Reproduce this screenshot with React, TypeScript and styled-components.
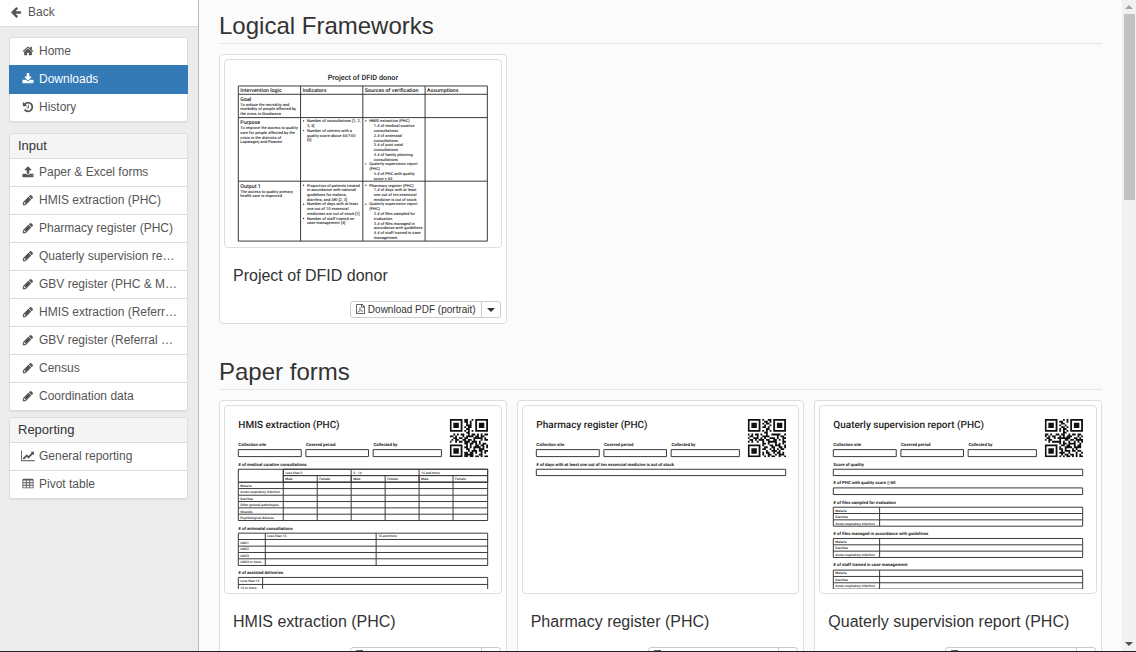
import React from 'react';
import styled, { createGlobalStyle, css } from 'styled-components';

const GlobalStyle = createGlobalStyle`
  * { box-sizing: border-box; }
  body {
    margin: 0;
    background: #fbfbfb;
    color: #333;
    font-family: "Liberation Sans", Arial, sans-serif;
    font-size: 12px;
    line-height: 17px;
  }
  h1, h2, p, ul { margin: 0; padding: 0; font-weight: 400; }
  a { color: inherit; text-decoration: none; }
  button { font: inherit; color: inherit; cursor: pointer; }
`;

/* ---------- icons ---------- */

const glyphs = {
  back: 'M1664 896v128q0 53-32.5 90.5t-84.5 37.5h-704l293 294q38 36 38 90t-38 90l-75 76q-37 37-90 37-52 0-91-37l-651-652q-37-37-37-90 0-52 37-91l651-650q38-38 91-38 52 0 90 38l75 74q38 38 38 91t-38 91l-293 293h704q52 0 84.5 37.5t32.5 90.5z',
  home: 'M1472 992v480q0 26-19 45t-45 19h-384v-384h-256v384h-384q-26 0-45-19t-19-45v-480q0-1 .5-3t.5-3l575-474 575 474q1 2 1 6zm223-69l-62 74q-8 9-21 11h-3q-13 0-21-7l-692-577-692 577q-12 8-24 7-13-2-21-11l-62-74q-8-10-7-23.5t11-21.5l719-599q32-26 76-26t76 26l244 204v-195q0-14 9-23t23-9h192q14 0 23 9t9 23v408l219 182q10 8 11 21.5t-7 23.5z',
  download:
    'M1344 1344q0-26-19-45t-45-19-45 19-19 45 19 45 45 19 45-19 19-45zm256 0q0-26-19-45t-45-19-45 19-19 45 19 45 45 19 45-19 19-45zm128-224v320q0 40-28 68t-68 28h-1472q-40 0-68-28t-28-68v-320q0-40 28-68t68-28h465l135 136q58 56 136 56t136-56l136-136h464q40 0 68 28t28 68zm-325-569q17 41-14 70l-448 448q-18 19-45 19t-45-19l-448-448q-31-29-14-70 17-39 59-39h256v-448q0-26 19-45t45-19h256q26 0 45 19t19 45v448h256q42 0 59 39z',
  upload:
    'M1344 1472q0-26-19-45t-45-19-45 19-19 45 19 45 45 19 45-19 19-45zm256 0q0-26-19-45t-45-19-45 19-19 45 19 45 45 19 45-19 19-45zm128-224v320q0 40-28 68t-68 28h-1472q-40 0-68-28t-28-68v-320q0-40 28-68t68-28h427q21 56 70.5 92t110.5 36h256q61 0 110.5-36t70.5-92h427q40 0 68 28t28 68zm-325-648q-17 40-59 40h-256v448q0 26-19 45t-45 19h-256q-26 0-45-19t-19-45v-448h-256q-42 0-59-40-17-39 14-69l448-448q18-19 45-19t45 19l448 448q31 30 14 69z',
  history:
    'M1664 896q0 156-61 298t-164 245-245 164-298 61q-172 0-327-72.5t-264-204.5q-7-10-6.5-22.5t8.5-20.5l137-138q10-9 25-9 16 2 23 12 73 95 179 147t225 52q104 0 198.5-40.5t163.5-109.5 109.5-163.5 40.5-198.5-40.5-198.5-109.5-163.5-163.5-109.5-198.5-40.5q-98 0-188 35.5t-160 101.5l137 138q31 30 14 69-17 40-59 40h-448q-26 0-45-19t-19-45v-448q0-42 40-59 39-17 69 14l130 129q107-101 244.5-156.5t284.5-55.5q156 0 298 61t245 164 164 245 61 298zm-640-288v448q0 14-9 23t-23 9h-320q-14 0-23-9t-9-23v-64q0-14 9-23t23-9h224v-352q0-14 9-23t23-9h64q14 0 23 9t9 23z',
  pencil:
    'M491 1536l91-91-235-235-91 91v107h128v128h107zM960 416l416 416-832 832h-416v-416zM1643 512q0 53-37 90l-166 166-416-416 166-165q36-38 90-38 53 0 91 38l235 234q37 39 37 91z',
  chart:
    'M2048 1536v128h-2048v-1536h128v1408h1920zm-128-1248v435q0 21-19.5 29.5t-35.5-7.5l-121-121-633 633q-10 10-23 10t-23-10l-233-233-416 416-192-192 585-585q10-10 23-10t23 10l233 233 464-464-121-121q-16-16-7.5-35.5t29.5-19.5h435q14 0 23 9t9 23z',
  table:
    'M224 128h1344q66 0 113 47t47 113v1088q0 66-47 113t-113 47h-1344q-66 0-113-47t-47-113v-1088q0-66 47-113t113-47zM192 384v256h384v-256zM704 384v256h384v-256zM1216 384v256h384v-256zM192 768v256h384v-256zM704 768v256h384v-256zM1216 768v256h384v-256zM192 1152v256h384v-256zM704 1152v256h384v-256zM1216 1152v256h384v-256z',
};

type GlyphName = keyof typeof glyphs;

const IconSvg = styled.svg`
  display: block;
  flex: none;
  fill: currentColor;
`;

function Glyph({ name }: { name: GlyphName }) {
  const wide = name === 'chart';
  return (
    <IconSvg width={wide ? 14 : 12} height="12" viewBox={wide ? '0 0 2048 1792' : '0 0 1792 1792'} aria-hidden="true">
      <path fillRule="evenodd" d={glyphs[name]} />
    </IconSvg>
  );
}

function PdfIcon() {
  return (
    <IconSvg width="9" height="10" viewBox="128 0 1536 1792" aria-hidden="true">
      <path
        fillRule="evenodd"
        d="M1596 380q28 28 48 76t20 88v1152q0 40-28 68t-68 28h-1344q-40 0-68-28t-28-68v-1600q0-40 28-68t68-28h896q40 0 88 20t76 48zm-444-244v376h376q-10-29-22-41l-313-313q-12-12-41-22zm384 1528v-1024h-416q-40 0-68-28t-28-68v-416h-768v1536h1280z"
      />
      <path
        fill="none"
        stroke="currentColor"
        strokeWidth="80"
        d="M440 1500q140-60 290-360 140-290 110-470-10-60-50-40-60 120 60 360 130 240 330 300 190 20 160-40-90-100-420-40-330 60-450 170-70 80-30 120z"
      />
    </IconSvg>
  );
}

/* ---------- page frame ---------- */

const Page = styled.div`
  display: flex;
  height: 100vh;
  overflow: hidden;
  border-bottom: 1px solid #222;
`;

const Sidebar = styled.nav`
  flex: 0 0 199px;
  min-width: 0;
  display: flex;
  flex-direction: column;
  background: #ececec;
  border-right: 1px solid #bbb;
  color: #555;
`;

const BackLink = styled.a`
  display: flex;
  align-items: center;
  gap: 6px;
  height: 27px;
  padding: 0 10px 2px;
  margin-bottom: 10px;
  background: #fff;
  border-bottom: 1px solid #ddd;
`;

const Panel = styled.section<{ $after?: number }>`
  margin: 0 10px ${(p) => p.$after ?? 6}px 9px;
  background: #fff;
  border: 1px solid #ddd;
  border-radius: 3px;
  box-shadow: 0 1px 1px rgba(0, 0, 0, 0.05);
`;

const PanelTitle = styled.h2`
  height: 24px;
  padding: 0 8px;
  background: #f5f5f5;
  border-radius: 2px 2px 0 0;
  color: #333;
  font-size: 13px;
  line-height: 24px;
`;

const PanelList = styled.ul`
  list-style: none;
`;

const NavRow = styled.li`
  h2 + ul > &, & + & { border-top: 1px solid #ddd; }
`;

const NavLink = styled.a<{ $active?: boolean }>`
  display: flex;
  align-items: center;
  gap: 3px;
  height: 27px;
  padding: 0 8px 0 10px;
  ${(p) =>
    p.$active &&
    css`
      position: relative;
      height: 29px;
      margin: -1px;
      padding: 0 9px 0 11px;
      background: #337ab7;
      color: #fff;
    `}
`;

const IconSlot = styled.span`
  flex: 0 0 16px;
  display: flex;
  justify-content: center;
  padding-bottom: 1px;
`;

const NavText = styled.span`
  overflow: hidden;
  text-overflow: ellipsis;
  white-space: nowrap;
`;

const Main = styled.main`
  flex: 1;
  min-width: 0;
  padding: 13px 20px 20px;
  overflow-y: auto;
  scrollbar-width: none;
`;

const Section = styled.section`
  margin-bottom: 35px;
`;

const SectionTitle = styled.h1`
  margin-bottom: 10px;
  padding-bottom: 4px;
  border-bottom: 1px solid #e5e5e5;
  font-size: 24px;
  line-height: 26px;
`;

const Cards = styled.div`
  display: grid;
  grid-template-columns: repeat(3, 1fr);
  gap: 10px;
`;

const CardBox = styled.article`
  padding: 4px;
  background: #fff;
  border: 1px solid #ddd;
  border-radius: 4px;
`;

const Thumbnail = styled.a`
  display: block;
  padding: 4px;
  border: 1px solid #ddd;
  border-radius: 4px;
`;

const Preview = styled.svg`
  display: block;
  width: 100%;
  font-family: Roboto, "Liberation Sans", sans-serif;
  fill: #222;
  text-rendering: geometricPrecision;
`;

const CardTitle = styled.h2`
  padding: 19px 9px 16px;
  font-size: 16px;
  line-height: 18px;
`;

const Actions = styled.div`
  display: flex;
  justify-content: flex-end;
  padding: 0 1px 1px;
`;

const ActionButton = styled.button`
  display: flex;
  align-items: center;
  gap: 3px;
  height: 17px;
  padding: 0 5px;
  background: #fff;
  border: 1px solid #ccc;
  border-radius: 3px 0 0 3px;
  font-size: 10px;
  line-height: 15px;
  white-space: nowrap;
`;

const CaretButton = styled(ActionButton)`
  justify-content: center;
  width: 20px;
  margin-left: -1px;
  border-radius: 0 3px 3px 0;
  &::after {
    content: '';
    margin-top: 2px;
    border: 4px solid transparent;
    border-top-color: #333;
    border-bottom: 0;
  }
`;

const ScrollTrack = styled.div`
  flex: 0 0 14px;
  display: flex;
  flex-direction: column;
  align-items: center;
  background: #f1f1f1;
`;

const ScrollArrow = styled.span<{ $down?: boolean }>`
  flex: 0 0 14px;
  display: flex;
  align-items: center;
  &::after {
    content: '';
    border: 4px solid transparent;
    ${(p) => (p.$down ? 'border-top-color: #505050; border-bottom: 0;' : 'border-bottom-color: #a3a3a3; border-top: 0;')}
  }
`;

const ScrollThumb = styled.div`
  align-self: stretch;
  flex: 0 1 186px;
  margin: 0 1px auto 2px;
  background: #c1c1c1;
`;

/* ---------- document previews ---------- */

const LINE = '#3a3a3a';

type LabelProps = { x: number; y: number; size?: number; weight?: number; children: React.ReactNode };

function Label({ x, y, size = 10, weight = 500, children }: LabelProps) {
  return (
    <text x={x} y={y} fontSize={size} fontWeight={weight}>
      {children}
    </text>
  );
}

function Grid({ xs, ys }: { xs: number[]; ys: number[] }) {
  const right = xs[xs.length - 1];
  const bottom = ys[ys.length - 1];
  return (
    <path
      fill="none"
      stroke={LINE}
      strokeWidth="3"
      d={ys.map((y) => `M${xs[0]} ${y}H${right}`).join('') + xs.map((x) => `M${x} ${ys[0]}V${bottom}`).join('')}
    />
  );
}

function LogFramePreview() {
  const blocks: Array<[number, number, string[]]> = [
    [34, 125, ['To reduce the mortality and', 'morbidity of people affected by', 'the crisis in Gondwana']],
    [34, 195, ['To improve the access to quality', 'care for people affected by the', 'crisis in the districts of', 'Lapatagerj and Pawnee']],
    [34, 387, ['The access to quality primary', 'health care is improved']],
    [234, 175, ['Number of consultations [1, 2,', '3, 4]', 'Number of centers with a', 'quality score above 60/100', '[5]']],
    [
      234,
      368,
      [
        'Proportion of patients treated',
        'in accordance with national',
        'guidelines for malaria,',
        'diarrhea, and ARI [2, 3]',
        'Number of days with at least',
        'one out of 10 essencial',
        'medicines are out of stock [1]',
        'Number of staff trained on',
        'case management [4]',
      ],
    ],
    [421, 175, ['HMIS extraction (PHC)']],
    [
      435,
      190,
      [
        '1.# of medical curative',
        'consultations',
        '2.# of antenatal',
        'consultations',
        '3.# of post natal',
        'consultations',
        '4.# of family planning',
        'consultations',
      ],
    ],
    [421, 304, ['Quaterly supervision report', '(PHC)']],
    [435, 333, ['5.# of PHC with quality', 'score ≥ 60']],
    [421, 368, ['Pharmacy register (PHC)']],
    [435, 383, ['1.# of days with at least', 'one out of ten essencial', 'medicine is out of stock']],
    [421, 425, ['Quaterly supervision report', '(PHC)']],
    [435, 454, ['2.# of files sampled for', 'evaluation', '3.# of files managed in', 'accordance with guidelines', '4.# of staff trained in case', 'management']],
  ];
  const bullets = [
    [224, 171],
    [224, 200],
    [224, 364],
    [224, 421],
    [224, 464],
    [411, 171],
    [411, 300],
    [411, 364],
    [411, 421],
  ];
  return (
    <Preview viewBox="0 0 804 537" role="img" aria-label="Project of DFID donor">
      <text x="402" y="47" fontSize="22" fontWeight="500" textAnchor="middle">
        Project of DFID donor
      </text>
      <Grid xs={[28, 215, 402, 589, 776]} ys={[66, 91, 161, 352, 532]} />
      {['Intervention logic', 'Indicators', 'Sources of verification', 'Assumptions'].map((t, i) => (
        <Label key={t} x={34 + 187 * i} y={85} size={16}>
          {t}
        </Label>
      ))}
      <Label x={34} y={111} size={16}>Goal</Label>
      <Label x={34} y={180} size={16}>Purpose</Label>
      <Label x={34} y={372} size={16}>Output 1</Label>
      {blocks.map(([x, y, lines]) =>
        lines.map((line, i) => (
          <Label key={`${x}-${y}-${i}`} x={x} y={y + Math.round(i * 14.3)} size={12}>
            {line}
          </Label>
        )),
      )}
      {bullets.map(([x, y]) => (
        <circle key={`${x}-${y}`} cx={x} cy={y} r="2" />
      ))}
    </Preview>
  );
}

const codes = {
  hmis: [
    '#######.##..#.#######',
    '#.....#.##.#..#.....#',
    '#.###.#..#.#..#.###.#',
    '#.###.#..###..#.###.#',
    '#.###.#.#.##..#.###.#',
    '#.....#..##...#.....#',
    '#######.#.#.#.#######',
    '.........##..........',
    '..#.#.##..#.##.#.#.##',
    '##.#...#.####.##.##..',
    '..##.##.##...#####.#.',
    '.#.##..##.##.#...#.##',
    '#..#.##.###.###.#....',
    '........##.##.#.#.##.',
    '#######..#.#..##.##.#',
    '#.....#.##.#.####.#.#',
    '#.###.#..##..#..###..',
    '#.###.#...#.###.##.##',
    '#.###.#.##.##.#..#.#.',
    '#.....#.#####...##...',
    '#######.##.##.##.#.##',
  ],
  pharmacy: [
    '#######.#..##.#######',
    '#.....#..##.#.#.....#',
    '#.###.#.#.##..#.###.#',
    '#.###.#..#..#.#.###.#',
    '#.###.#.##.#..#.###.#',
    '#.....#...##..#.....#',
    '#######.#.#.#.#######',
    '.........##..........',
    '#.#.##.#..#..#####..#',
    '.##..#..####....#.##.',
    '#..###.#.#..###.#..##',
    '.##.#.###.##..##.#.#.',
    '#.#..#..#..#####...##',
    '........##.#...#.#.#.',
    '#######.#...##.###..#',
    '#.....#..##..##..##.#',
    '#.###.#.##..#.#.#.##.',
    '#.###.#...#..###.#...',
    '#.###.#.#.##..#.##.#.',
    '#.....#.#..##..#.###.',
    '#######..#.#.##..#..#',
  ],
  quarterly: [
    '#######...#.#.#######',
    '#.....#.##..#.#.....#',
    '#.###.#..##...#.###.#',
    '#.###.#.#..#..#.###.#',
    '#.###.#..##.#.#.###.#',
    '#.....#.#.##..#.....#',
    '#######.#.#.#.#######',
    '..........##.........',
    '##.#..##.##..#.##.##.',
    '#.#.##..#.#.###...#.#',
    '.##..#.#######..##.#.',
    '#.##....#..##.##.####',
    '..#.#####.#..#..#.#.#',
    '........#.##.####..#.',
    '#######..##.##..#.##.',
    '#.....#.#..####.####.',
    '#.###.#.##.#...#.#...',
    '#.###.#..#.###.##.##.',
    '#.###.#.###..#...#..#',
    '#.....#..#.##.##.#.#.',
    '#######.#.#.##.#.#.##',
  ],
};

type CodeName = keyof typeof codes;

function FormHeader({ title, code }: { title: string; code: CodeName }) {
  const d = codes[code]
    .map((row, y) => row.split('').map((c, x) => (c === '#' ? `M${x} ${y}h1v1h-1z` : '')).join(''))
    .join('');
  return (
    <>
      <Label x={28} y={55} size={30}>{title}</Label>
      <Heading x={28} y={109}>Collection site</Heading>
      <Heading x={231} y={109}>Covered period</Heading>
      <Heading x={434} y={109}>Collected by</Heading>
      <Grid xs={[28, 217]} ys={[119, 140]} />
      <Grid xs={[231, 419]} ys={[119, 140]} />
      <Grid xs={[433, 638]} ys={[119, 140]} />
      <svg x="663" y="27" width="115" height="115" viewBox="0 0 21 21">
        <path fill="#111" d={d} />
      </svg>
    </>
  );
}

function Heading({ x = 28, y, children }: { x?: number; y: number; children: React.ReactNode }) {
  return (
    <Label x={x} y={y} size={13} weight={700}>
      {children}
    </Label>
  );
}

function HmisPreview() {
  return (
    <Preview viewBox="0 0 804 537" role="img" aria-label="HMIS extraction (PHC)">
      <FormHeader title="HMIS extraction (PHC)" code="hmis" />
      <Heading y={167}># of medical curative consultations</Heading>
      <Grid xs={[28, 163, 367, 571, 777]} ys={[178, 217]} />
      <Grid xs={[163, 777]} ys={[178, 197]} />
      <Grid xs={[163, 265, 367, 469, 571, 673, 777]} ys={[197, 217]} />
      <Grid xs={[28, 163, 265, 367, 469, 571, 673, 777]} ys={[217, 236, 256, 275, 294, 313, 332]} />
      {['Less than 5', '5 - 14', '15 and more'].map((t, i) => (
        <Label key={t} x={169 + 204 * i} y={191}>{t}</Label>
      ))}
      {[0, 1, 2, 3, 4, 5].map((i) => (
        <Label key={i} x={169 + 102 * i} y={211}>{i % 2 ? 'Female' : 'Male'}</Label>
      ))}
      {['Malaria', 'Acute respiratory infection', 'Diarrhea', 'Other general pathologies', 'Wounds', 'Psychological distress'].map((t, i) => (
        <Label key={t} x={34} y={230 + Math.round(19.4 * i)}>{t}</Label>
      ))}
      <Heading y={359}># of antenatal consultations</Heading>
      <Grid xs={[28, 109, 442, 777]} ys={[370, 389, 409, 428, 447, 467]} />
      <Label x={115} y={383}>Less than 15</Label>
      <Label x={448} y={383}>15 and more</Label>
      {['ANC1', 'ANC2', 'ANC3', 'ANC4 or more'].map((t, i) => (
        <Label key={t} x={34} y={403 + Math.round(19.4 * i)}>{t}</Label>
      ))}
      <Heading y={494}># of assisted deliveries</Heading>
      <Grid xs={[28, 101, 777]} ys={[503, 524, 543]} />
      <Label x={34} y={518}>Less than 15</Label>
      <Label x={34} y={537}>15 or more</Label>
    </Preview>
  );
}

function PharmacyPreview() {
  return (
    <Preview viewBox="0 0 804 537" role="img" aria-label="Pharmacy register (PHC)">
      <FormHeader title="Pharmacy register (PHC)" code="pharmacy" />
      <Heading y={167}># of days with at least one out of ten essencial medicine is out of stock</Heading>
      <Grid xs={[28, 777]} ys={[178, 197]} />
    </Preview>
  );
}

function SupervisionPreview() {
  const tables: Array<[number, string]> = [
    [281, '# of files sampled for evaluation'],
    [375, '# of files managed in accordance with guidelines'],
    [470, '# of staff trained in case management'],
  ];
  return (
    <Preview viewBox="0 0 804 537" role="img" aria-label="Quaterly supervision report (PHC)">
      <FormHeader title="Quaterly supervision report (PHC)" code="quarterly" />
      <Heading y={167}>Score of quality</Heading>
      <Grid xs={[28, 777]} ys={[178, 197]} />
      <Heading y={223}># of PHC with quality score ▯ 60</Heading>
      <Grid xs={[28, 777]} ys={[234, 254]} />
      {tables.map(([y, title]) => (
        <g key={title}>
          <Heading y={y}>{title}</Heading>
          <Grid xs={[28, 167, 777]} ys={[y + 11, y + 30, y + 49, y + 68]} />
          <Label x={34} y={y + 24}>Malaria</Label>
          <Label x={34} y={y + 44}>Diarrhea</Label>
          <Label x={34} y={y + 63}>Acute respiratory infection</Label>
        </g>
      ))}
    </Preview>
  );
}

/* ---------- composition ---------- */

type Item = { icon: GlyphName; text: string; active?: boolean };

const mainItems: Item[] = [
  { icon: 'home', text: 'Home' },
  { icon: 'download', text: 'Downloads', active: true },
  { icon: 'history', text: 'History' },
];

const inputItems: Item[] = [
  { icon: 'upload', text: 'Paper & Excel forms' },
  { icon: 'pencil', text: 'HMIS extraction (PHC)' },
  { icon: 'pencil', text: 'Pharmacy register (PHC)' },
  { icon: 'pencil', text: 'Quaterly supervision report (PHC)' },
  { icon: 'pencil', text: 'GBV register (PHC & Mobile clinics)' },
  { icon: 'pencil', text: 'HMIS extraction (Referral hospital)' },
  { icon: 'pencil', text: 'GBV register (Referral hospital)' },
  { icon: 'pencil', text: 'Census' },
  { icon: 'pencil', text: 'Coordination data' },
];

const reportingItems: Item[] = [
  { icon: 'chart', text: 'General reporting' },
  { icon: 'table', text: 'Pivot table' },
];

function NavItems({ items }: { items: Item[] }) {
  return (
    <PanelList>
      {items.map((item) => (
        <NavRow key={item.text}>
          <NavLink href="#" $active={item.active} aria-current={item.active ? 'page' : undefined}>
            <IconSlot>
              <Glyph name={item.icon} />
            </IconSlot>
            <NavText>{item.text}</NavText>
          </NavLink>
        </NavRow>
      ))}
    </PanelList>
  );
}

function Card({ title, children }: { title: string; children: React.ReactNode }) {
  return (
    <CardBox>
      <Thumbnail href="#">{children}</Thumbnail>
      <CardTitle>{title}</CardTitle>
      <Actions>
        <ActionButton type="button">
          <PdfIcon />
          Download PDF (portrait)
        </ActionButton>
        <CaretButton type="button" aria-label="More formats" />
      </Actions>
    </CardBox>
  );
}

export default function App() {
  return (
    <>
      <GlobalStyle />
      <Page>
        <Sidebar>
          <BackLink href="#">
            <Glyph name="back" />
            Back
          </BackLink>
          <Panel $after={11}>
            <NavItems items={mainItems} />
          </Panel>
          <Panel>
            <PanelTitle>Input</PanelTitle>
            <NavItems items={inputItems} />
          </Panel>
          <Panel>
            <PanelTitle>Reporting</PanelTitle>
            <NavItems items={reportingItems} />
          </Panel>
        </Sidebar>
        <Main>
          <Section>
            <SectionTitle>Logical Frameworks</SectionTitle>
            <Cards>
              <Card title="Project of DFID donor">
                <LogFramePreview />
              </Card>
            </Cards>
          </Section>
          <Section>
            <SectionTitle>Paper forms</SectionTitle>
            <Cards>
              <Card title="HMIS extraction (PHC)">
                <HmisPreview />
              </Card>
              <Card title="Pharmacy register (PHC)">
                <PharmacyPreview />
              </Card>
              <Card title="Quaterly supervision report (PHC)">
                <SupervisionPreview />
              </Card>
            </Cards>
          </Section>
        </Main>
        <ScrollTrack aria-hidden="true">
          <ScrollArrow />
          <ScrollThumb />
          <ScrollArrow $down />
        </ScrollTrack>
      </Page>
    </>
  );
}
